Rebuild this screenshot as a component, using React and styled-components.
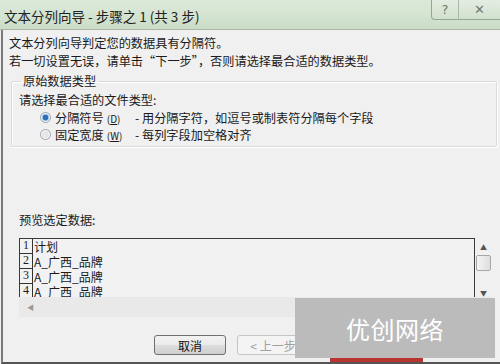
import React from 'react';
import styled, { createGlobalStyle } from 'styled-components';

const GlobalStyle = createGlobalStyle`
    html, body {
        margin: 0;
        padding: 0;
        background: #f0f0f0;
        overflow: hidden;
    }
    * {
        box-sizing: border-box;
    }
`;

const FONT = `'Noto Sans CJK SC', 'Noto Sans', sans-serif`;

const Window = styled.div`
    position: relative;
    width: 500px;
    height: 364px;
    display: flex;
    flex-direction: column;
    background: #f0f0f0;
    font: 400 12.2px ${FONT};
    color: #1a1a1a;
    overflow: hidden;
`;

const TitleBar = styled.div`
    height: 30px;
    flex-shrink: 0;
    display: flex;
    align-items: flex-start;
    justify-content: space-between;
    background: linear-gradient(180deg, #dde9da 0%, #d3e3d0 60%, #cadbc6 100%);
    border-bottom: 1px solid #a9b8a6;
`;

const Title = styled.div`
    padding: 6px 0 0 4px;
    font-size: 13.5px;
    color: #222;
`;

const TitleButtons = styled.div`
    display: flex;
    height: 20px;
    border: 1px solid #93a890;
    border-top: none;
    border-right: none;
    border-radius: 0 0 0 4px;
    background: linear-gradient(180deg, #e3ede1, #d2e1cf);
`;

const TitleButton = styled.div`
    width: ${(p) => p.w}px;
    height: 100%;
    display: flex;
    align-items: center;
    justify-content: center;
    color: #6d7e6b;
    font: 400 13px 'DejaVu Sans', sans-serif;
    & + & {
        border-left: 1px solid #a9b8a6;
    }
`;

const Body = styled.div`
    flex: 1;
    display: flex;
    flex-direction: column;
    border-left: 2px solid #7a7a7a;
    border-bottom: 2px solid #555;
    margin-left: 1px;
    padding: 4px 3px 0 6px;
`;

const Line = styled.div`
    height: 18px;
    line-height: 18px;
    white-space: nowrap;
`;

const Group = styled.fieldset`
    margin: 3px 0 0 2px;
    padding: 2px 0 3px 7px;
    border: 1px solid #dadada;
    box-shadow: inset 1px 1px 0 #fff, 1px 1px 0 #fff;
    border-radius: 2px;
`;

const Legend = styled.legend`
    padding: 0 2px;
    margin-left: 2px;
    line-height: 16px;
`;

const RadioRow = styled.div`
    display: flex;
    align-items: center;
    height: 17px;
    padding-left: 21px;
    white-space: nowrap;
`;

const Radio = styled.span`
    width: 11px;
    height: 11px;
    border-radius: 50%;
    margin-right: 4px;
    border: 1px solid #9aa3ad;
    background: ${(p) =>
        p.checked
            ? 'radial-gradient(circle, #2a6fb8 0 2.5px, #8fb6de 3px, #eef3f8 4px)'
            : 'radial-gradient(circle, #e6e6e6 0 3px, #f7f7f7 4px)'};
`;

const Option = styled.span`
    width: 80px;
`;

const Key = styled.span`
    font-size: 10px;
    margin-left: 3px;
`;

const Hint = styled.span``;

const PreviewLabel = styled.div`
    margin: 64px 0 0 10px;
    height: 18px;
    line-height: 18px;
`;

const Preview = styled.div`
    margin: 9px 0 0 10px;
    display: grid;
    grid-template-columns: 456px 17px;
    grid-template-rows: 59px 20px;
`;

const PreviewData = styled.div`
    border: 1px solid #3a3a3a;
    border-bottom: none;
    overflow: hidden;
    background: #f2f2f2;
`;

const DataRow = styled.div`
    display: flex;
    height: 15px;
    overflow: hidden;
`;

const RowNum = styled.div`
    width: 13px;
    height: 15px;
    border: 1px solid #333;
    border-top: none;
    border-left: none;
    font: 400 12px 'Liberation Serif', serif;
    display: flex;
    align-items: flex-end;
    justify-content: center;
    line-height: 13px;
    padding-bottom: 1px;
`;

const Cell = styled.div`
    padding-left: 1px;
    font-size: 12px;
    line-height: 15px;
    white-space: nowrap;
`;

const VScroll = styled.div`
    display: flex;
    flex-direction: column;
    align-items: center;
    padding-top: 5px;
    gap: 4px;
    color: #555;
    font-size: 7px;
    background: #f0f0f0;
`;

const Thumb = styled.div`
    width: 15px;
    height: 16px;
    border: 1px solid #a7a7a7;
    border-radius: 2px;
    background: linear-gradient(90deg, #f4f4f4, #dedede);
`;

const ScrollArrow = styled.div`
    margin-top: ${(p) => p.top || 0}px;
    line-height: 8px;
`;

const HScroll = styled.div`
    background: #e9e9e9;
    display: flex;
    align-items: center;
    padding-left: 8px;
    color: #999;
    font-size: 7px;
`;

const ButtonRow = styled.div`
    display: flex;
    justify-content: flex-end;
    gap: 11px;
    margin-top: auto;
    padding: 0 22px 7px 0;
`;

const Button = styled.div`
    width: 72px;
    height: 20px;
    display: flex;
    align-items: center;
    justify-content: center;
    border: 1px solid ${(p) => (p.disabled ? '#c4c4c4' : '#707070')};
    border-radius: 3px;
    background: ${(p) =>
        p.disabled ? '#f4f4f4' : 'linear-gradient(180deg, #f2f2f2 0%, #ebebeb 50%, #dddddd 51%, #cfcfcf 100%)'};
    color: ${(p) => (p.disabled ? '#a0a0a0' : '#111')};
    font-size: 12px;
`;

const Watermark = styled.div`
    position: absolute;
    left: 295px;
    top: 298px;
    width: 200px;
    height: 60px;
    background: #bbbbbb;
    display: flex;
    align-items: center;
    justify-content: center;
    color: #fff;
    font: 400 24px ${FONT};
    letter-spacing: 0.5px;
`;

const WatermarkLine = styled.div`
    position: absolute;
    left: 330px;
    top: 358px;
    width: 93px;
    height: 4px;
    background: #b8362f;
`;

const rows = ['计划', 'A_广西_品牌', 'A_广西_品牌', 'A_广西_品牌'];

export default function App() {
    return (
        <Window>
            <GlobalStyle />
            <TitleBar>
                <Title>文本分列向导 - 步骤之 1 (共 3 步)</Title>
                <TitleButtons>
                    <TitleButton w={26}>?</TitleButton>
                    <TitleButton w={42}>✕</TitleButton>
                </TitleButtons>
            </TitleBar>
            <Body>
                <Line>文本分列向导判定您的数据具有分隔符。</Line>
                <Line>若一切设置无误，请单击“下一步”，否则请选择最合适的数据类型。</Line>
                <Group>
                    <Legend>原始数据类型</Legend>
                    <Line>请选择最合适的文件类型:</Line>
                    <RadioRow>
                        <Radio checked />
                        <Option>
                            分隔符号<Key>(<u>D</u>)</Key>
                        </Option>
                        <Hint>- 用分隔字符，如逗号或制表符分隔每个字段</Hint>
                    </RadioRow>
                    <RadioRow>
                        <Radio />
                        <Option>
                            固定宽度<Key>(<u>W</u>)</Key>
                        </Option>
                        <Hint>- 每列字段加空格对齐</Hint>
                    </RadioRow>
                </Group>
                <PreviewLabel>预览选定数据:</PreviewLabel>
                <Preview>
                    <PreviewData>
                        {rows.map((r, i) => (
                            <DataRow key={i}>
                                <RowNum>{i + 1}</RowNum>
                                <Cell>{r}</Cell>
                            </DataRow>
                        ))}
                    </PreviewData>
                    <VScroll>
                        <ScrollArrow>▲</ScrollArrow>
                        <Thumb />
                        <ScrollArrow top={14}>▼</ScrollArrow>
                    </VScroll>
                    <HScroll>◀</HScroll>
                    <HScroll />
                </Preview>
                <ButtonRow>
                    <Button>取消</Button>
                    <Button disabled>&lt; 上一步</Button>
                    <Button>下一步 &gt;</Button>
                    <Button>完成</Button>
                </ButtonRow>
            </Body>
            <Watermark>优创网络</Watermark>
            <WatermarkLine />
        </Window>
    );
}
